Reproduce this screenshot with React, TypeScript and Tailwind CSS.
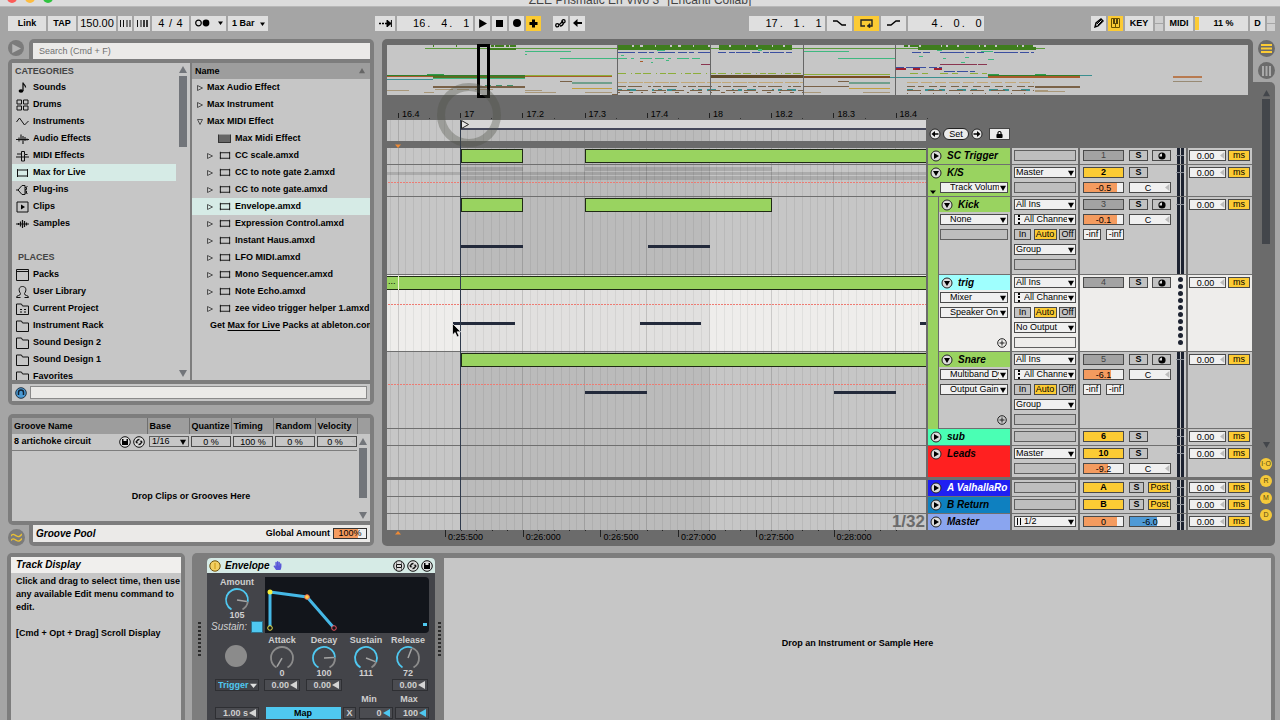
import React from 'react';
import clsx from 'clsx';
import { FaHandPaper, FaLock } from 'react-icons/fa';

// ---------- timeline scale ----------
const BEAT = 62.2;
const ORIGIN = 11; // x of 16.4 inside the lane
const beatX = (n: number) => ORIGIN + n * BEAT;

interface Clip {
  x: number;
  w: number;
}

interface Track {
  name: string;
  height: string;
  color: string;
  child?: boolean;
  group?: boolean;
  fullColor?: boolean;
  open?: boolean;
  whiteName?: boolean;
  selected?: boolean;
  thick?: boolean;
  nameSlots?: string[];
  io: string[];
  num?: string;
  numOn?: boolean;
  solo?: boolean;
  rec?: boolean;
  post?: boolean;
  vol?: string;
  volFill?: string;
  pan?: string;
  inf?: boolean;
  dots?: boolean;
  plus?: boolean;
  clips?: Clip[];
  notes?: Clip[];
  noteY?: number;
  dashY?: number;
  summary?: boolean;
}

const TRACKS: Track[] = [
  { name: 'SC Trigger', height: 'h-[17px]', color: 'bg-[#99d360]', fullColor: true, io: [''], num: '1', solo: true, rec: true, clips: [{ x: 74, w: 62 }, { x: 198, w: 2000 }] },
  { name: 'K/S', height: 'h-8', color: 'bg-[#99d360]', fullColor: true, group: true, open: true, nameSlots: ['Track Volume'], io: ['Master', ''], num: '2', numOn: true, solo: true, vol: '-0.5', volFill: 'bg-[linear-gradient(90deg,#f49b5f_84%,#f0f0f0_84%)]', pan: 'C', dashY: 17, summary: true },
  { name: 'Kick', height: 'h-[78px]', color: 'bg-[#99d360]', child: true, open: true, nameSlots: ['None', ''], io: ['All Ins', '⋮All Channels', 'monitor', 'Group', ''], num: '3', solo: true, rec: true, vol: '-0.1', volFill: 'bg-[linear-gradient(90deg,#f49b5f_84%,#f0f0f0_84%)]', pan: 'C', inf: true, clips: [{ x: 74, w: 62 }, { x: 198, w: 187 }], notes: [{ x: 74, w: 62 }, { x: 261, w: 62 }], noteY: 48 },
  { name: 'trig', height: 'h-[77px]', color: 'bg-[#9ffffe]', child: true, open: true, selected: true, nameSlots: ['Mixer', 'Speaker On'], io: ['All Ins', '⋮All Channels', 'monitor', 'No Output', ''], num: '4', solo: true, rec: true, dots: true, plus: true, clips: [{ x: -10, w: 2000 }], notes: [{ x: 66, w: 62 }, { x: 253, w: 61 }, { x: 533, w: 62 }], noteY: 47, dashY: 29 },
  { name: 'Snare', height: 'h-[77px]', color: 'bg-[#99d360]', child: true, open: true, nameSlots: ['Multiband Dynamics', 'Output Gain'], io: ['All Ins', '⋮All Channels', 'monitor', 'Group', ''], num: '5', solo: true, rec: true, vol: '-6.1', volFill: 'bg-[linear-gradient(90deg,#f49b5f_70%,#f0f0f0_70%)]', pan: 'C', inf: true, plus: true, clips: [{ x: 74, w: 2000 }], notes: [{ x: 198, w: 62 }, { x: 447, w: 62 }], noteY: 39, dashY: 32 },
  { name: 'sub', height: 'h-[17px]', color: 'bg-[#4affb4]', fullColor: true, io: [''], num: '6', numOn: true, solo: true },
  { name: 'Leads', height: 'h-[34px]', color: 'bg-[#ff2020]', fullColor: true, thick: true, io: ['Master', ''], num: '10', numOn: true, solo: true, vol: '-9.2', volFill: 'bg-[linear-gradient(90deg,#f49b5f_62%,#f0f0f0_62%)]', pan: 'C' },
  { name: 'A ValhallaRo', height: 'h-[17px]', color: 'bg-[#1f1ff2]', fullColor: true, whiteName: true, io: [''], num: 'A', numOn: true, solo: true, post: true },
  { name: 'B Return', height: 'h-[17px]', color: 'bg-[#0e80c0]', fullColor: true, io: [''], num: 'B', numOn: true, solo: true, post: true },
  { name: 'Master', height: 'h-4', color: 'bg-[#8aa5ef]', fullColor: true, io: ['ǁ1/2'] },
];

// ---------- small pieces ----------
const Tri = ({ dir = 'down', className = '' }: { dir?: 'down' | 'up' | 'left' | 'right'; className?: string }) => {
  const d = { down: 'M0 1h8L4 8z', up: 'M0 7h8L4 0z', left: 'M7 0v8L0 4z', right: 'M1 0v8l7-4z' }[dir];
  return (
    <svg viewBox="0 0 8 8" preserveAspectRatio="none" className={clsx('shrink-0', className)} fill="currentColor" aria-hidden>
      <path d={d} />
    </svg>
  );
};

function Drop({ value, icon, label, indent }: { value: string; icon?: 'dots' | 'bars'; label: string; indent?: boolean }) {
  return (
    <div className="relative h-[11px] w-full border border-[#4a4a4a] bg-[#f0f0f0]">
      <select
        aria-label={label}
        className={clsx('block h-[9px] w-full appearance-none overflow-hidden bg-transparent pr-2 text-[9px] leading-[9px] outline-none', icon || indent ? 'pl-[9px]' : 'pl-px')}
      >
        <option>{value}</option>
      </select>
      {icon === 'dots' && <span className="absolute left-[3px] top-0 h-[9px] border-l-2 border-dotted border-black" />}
      {icon === 'bars' && <span className="absolute left-[2px] top-px h-[7px] w-1 border-x border-black" />}
      <Tri className="pointer-events-none absolute right-px top-[2px] h-[6px] w-[6px]" />
    </div>
  );
}

const Blank = ({ white }: { white?: boolean }) => (
  <div className={clsx('h-[11px] w-full border border-[#5f5f5f]', white ? 'bg-[#eeedeb]' : 'bg-[#bebebe]')} />
);

function Num({ value, label, className, slider }: { value: string; label: string; className: string; slider?: boolean }) {
  return (
    <div className={clsx('relative h-[11px] shrink-0 border border-[#4a4a4a]', className)}>
      <input aria-label={label} defaultValue={value} className={clsx('block h-[9px] w-full bg-transparent text-center text-[9px] leading-[9px] outline-none', slider && 'pr-1')} />
      {slider && <Tri dir="left" className="absolute right-0 top-px h-[7px] w-[5px] text-[#bdbdbd]" />}
    </div>
  );
}

const Mini = ({ children, className }: { children: React.ReactNode; className: string }) => (
  <button className={clsx('flex h-[11px] shrink-0 items-center justify-center overflow-hidden border border-[#4a4a4a] text-[9px] leading-[9px]', className)}>
    {children}
  </button>
);

function Fold({ open }: { open?: boolean }) {
  return (
    <button aria-label="Unfold track" className="shrink-0">
      <svg width="12" height="12" viewBox="0 0 12 12">
        <circle cx="6" cy="6" r="5" fill="#dcdcdc" stroke="#222" />
        <path d={open ? 'M3 4h6L6 9z' : 'M4 3v6l5-3z'} fill="#000" />
      </svg>
    </button>
  );
}

// ---------- transport ----------
function TBox({ className, children, on, label }: { className: string; children: React.ReactNode; on?: boolean; label?: string }) {
  return (
    <button aria-label={label} className={clsx('flex h-[15px] shrink-0 items-center justify-center text-[9px] font-bold leading-[15px]', on ? 'bg-[#fccb34]' : 'bg-[#dfdfdf]', className)}>
      {children}
    </button>
  );
}

function Position({ label, parts, className }: { label: string; parts: string[]; className: string }) {
  return (
    <div className={clsx('flex h-[15px] shrink-0 items-center justify-end bg-[#dfdfdf] text-[11px]', className)}>
      {parts.map((p, i) => (
        <React.Fragment key={i}>
          <input aria-label={`${label} ${i + 1}`} defaultValue={p} className="h-[15px] w-[13px] bg-transparent text-right outline-none" />
          {i < 2 && <span className="w-[9px] pl-[2px]">.</span>}
        </React.Fragment>
      ))}
    </div>
  );
}

const Leds = () => (
  <div className="flex w-2 flex-col gap-px">
    <span className="h-[7px] bg-[#cfcfcf]" />
    <span className="h-[7px] bg-[#cfcfcf]" />
  </div>
);

function Transport() {
  return (
    <div className="flex h-4 items-center pl-2 pr-[5px]">
      <div className="flex gap-[2px]">
        <TBox className="w-[38px]">Link</TBox>
        <TBox className="w-7">TAP</TBox>
        <input aria-label="Tempo" defaultValue="150.00" className="h-[15px] w-[38px] bg-[#dfdfdf] text-center text-[11px] outline-none" />
        <TBox className="w-[14px]" label="Nudge down">
          <svg width="11" height="7" viewBox="0 0 11 7" stroke="#111"><path d="M.5 0v7M3.5 0v7M7 0v7M10 0v7" strokeWidth="1" /></svg>
        </TBox>
        <TBox className="w-4" label="Nudge up">
          <svg width="11" height="7" viewBox="0 0 11 7" stroke="#111"><path d="M.5 0v7M4 0v7" /><path d="M7 0v7M10 0v7" strokeWidth="1.6" /></svg>
        </TBox>
        <div className="flex h-[15px] w-[37px] items-center justify-around bg-[#dfdfdf] px-1 text-[11px]">
          <span>4</span><span>/</span><span>4</span>
        </div>
        <TBox className="w-[35px] gap-2" label="Metronome">
          <svg width="15" height="8" viewBox="0 0 15 8"><circle cx="3.5" cy="4" r="2.8" fill="none" stroke="#000" strokeWidth="1.2" /><circle cx="11" cy="4" r="3.4" /></svg>
          <Tri className="h-1 w-[5px]" />
        </TBox>
        <div className="relative h-[15px] w-10 bg-[#dfdfdf]">
          <select aria-label="Quantization" className="h-[15px] w-full appearance-none pl-1 text-[9px] font-bold outline-none">
            <option>1 Bar</option>
          </select>
          <Tri className="pointer-events-none absolute right-[3px] top-[6px] h-1 w-[5px]" />
        </div>
      </div>
      <div className="grow-[109]" />
      <div className="flex gap-[2px]">
        <TBox className="w-5" label="Follow">
          <svg width="13" height="7" viewBox="0 0 13 7"><path d="M0 3.5h2M3 3.5h2M6 3.5h6" stroke="#000" strokeWidth="1.6" /><path d="M8 0l4 3.5L8 7zM12.4 0v7" stroke="#000" /></svg>
        </TBox>
        <Position label="Position" parts={['16', '4', '1']} className="w-[76px] pr-1" />
        <TBox className="w-[15px]" label="Play"><Tri dir="right" className="h-[9px] w-[9px]" /></TBox>
        <TBox className="w-[15px]" label="Stop"><span className="size-[7px] bg-black" /></TBox>
        <TBox className="w-[15px]" label="Record"><span className="size-[8px] rounded-full bg-black" /></TBox>
        <TBox className="w-[15px]" on label="Overdub">
          <svg width="9" height="9" viewBox="0 0 9 9" stroke="#000" strokeWidth="3"><path d="M4.500 .5v8M.5 4.500h8" /></svg>
        </TBox>
        <div className="w-[8px]" />
        <TBox className="w-[15px]" label="Automation arm">
          <svg width="11" height="9" viewBox="0 0 11 9" fill="none" stroke="#000" strokeWidth="1.3"><circle cx="2.300" cy="6.300" r="1.600" /><path d="M4 6l4-4" /><circle cx="8.500" cy="2.300" r="1.600" /><path d="M5 7c2 0 3-1 3.500-3" /></svg>
        </TBox>
        <TBox className="w-[15px]" label="Back to arrangement">
          <svg width="9" height="8" viewBox="0 0 9 8"><path d="M0 4l4.500-4v8z" /><path d="M3 4h6" stroke="#000" strokeWidth="2" /></svg>
        </TBox>
      </div>
      <div className="grow-[166]" />
      <div className="flex gap-[2px]">
        <Position label="Loop start" parts={['17', '1', '1']} className="w-[76px] pr-[3px]" />
        <TBox className="w-[25px]" label="Punch in"><svg width="13" height="6" viewBox="0 0 13 6" fill="none" stroke="#000" strokeWidth="1.4"><path d="M0 1h4l5 4h4" /></svg></TBox>
        <TBox className="w-[25px]" on label="Loop">
          <svg width="13" height="9" viewBox="0 0 13 9" fill="none" stroke="#222" strokeWidth="1.4"><path d="M5 7H1V1h11v6H9" /><path d="M10 4.500L7 7l3 2z" fill="#222" strokeWidth=".5" /></svg>
        </TBox>
        <TBox className="w-[25px]" label="Punch out"><svg width="13" height="6" viewBox="0 0 13 6" fill="none" stroke="#000" strokeWidth="1.4"><path d="M0 5h4l5-4h4" /></svg></TBox>
        <Position label="Loop length" parts={['4', '0', '0']} className="w-[76px] pr-[2px]" />
      </div>
      <div className="grow-[109]" />
      <div className="flex gap-[2px]">
        <TBox className="w-[15px]" label="Draw mode">
          <svg width="10" height="10" viewBox="0 0 10 10"><path d="M1 9l1-4 5-4 2 2-5 5z" fill="none" stroke="#000" strokeWidth="1.4" /><path d="M3 6l4-4M4 7l4-4" stroke="#000" /></svg>
        </TBox>
        <TBox className="w-[15px]" on label="Computer MIDI keyboard">
          <svg width="9" height="10" viewBox="0 0 9 10" fill="none" stroke="#6b5200"><path d="M.5.5h8v9h-8zM4.500 5v4" /><path d="M3 1v5M6 1v5" stroke="#2b2100" strokeWidth="1.6" /></svg>
        </TBox>
        <TBox className="w-7">KEY</TBox>
        <Leds />
        <TBox className="w-7">MIDI</TBox>
        <div className="flex h-[15px] w-[53px] items-center bg-[#dfdfdf] text-[9px] font-bold">
          <span className="h-[13px] w-1 bg-[#fccb34]" />
          <span className="flex-1 text-center">11 %</span>
        </div>
        <TBox className="w-[15px]">D</TBox>
        <Leds />
      </div>
    </div>
  );
}

// ---------- browser ----------
const ICONS: Record<string, React.ReactNode> = {
  sounds: <g><ellipse cx="5" cy="10" rx="2.400" ry="1.800" fill="#000" stroke="none" /><path d="M7 10V1.500c0 2 3 2.500 2.500 5" strokeWidth="1.300" /></g>,
  drums: <path d="M1 2h4.500v4H1zM7.500 2H12v4H7.500zM1 8h4.500v4H1zM7.500 8H12v4H7.500z" />,
  instruments: <path d="M.5 7l3-4 5 7 4-4" />,
  audio: <path d="M0 7.500h13M3 5.500v4M5 2.500v6M7 4v8M9 5v4M11 6.500v2" strokeWidth="1.100" />,
  midi: <path d="M1 5h4.500V2.500h3V5M0 8h13M5.500 5v7h3V5.500h3" />,
  max: <path d="M1.500 4h10v6h-10zM1.500 3v2M11.500 3v2M1.500 9v2M11.500 9v2" />,
  plug: <path d="M6 2.500H9v9H6M6 2.500L2 7l4 4.500M0 7h3M9 4.500h1.500v2H9M9 8h1.500v2H9M11 3v1M11 10v1" />,
  clips: <g><path d="M1 2h11v10H1z" /><path d="M5 4.500v5L9 7z" fill="#000" stroke="none" /></g>,
  samples: <path d="M0 7h13M2.500 6v2M4.500 4.500v5M6.500 3v8M8.500 4v6M10.500 5.500v3" strokeWidth="1.200" />,
  packs: <path d="M.5 1.500h12v11H.5zM.5 3.500h12" />,
  user: <path d="M.5 12.500h4M8.500 12.500h4M.5 12.500c0-3 4-1 4-4C2 5 3 1.500 6.500 1.500S11 5 8.500 8.500c0 3 4 1 4 4" />,
  project: <path d="M.5 12.500V2h5l1 2h6v8.500zM4 7.500h2M8 7.500h2M4 10h2M8 10h2" />,
  folder: <path d="M.5 12.500V2h5l1 2h6v8.500z" />,
};

const BIcon = ({ name, className = 'h-[14px] w-[13px]' }: { name: string; className?: string }) => (
  <svg viewBox="0 0 13 14" className={clsx('shrink-0', className)} fill="none" stroke="#111" aria-hidden>{ICONS[name]}</svg>
);

const CATEGORIES = [
  ['sounds', 'Sounds'], ['drums', 'Drums'], ['instruments', 'Instruments'], ['audio', 'Audio Effects'], ['midi', 'MIDI Effects'],
  ['max', 'Max for Live'], ['plug', 'Plug-ins'], ['clips', 'Clips'], ['samples', 'Samples'],
];
const PLACES = [
  ['packs', 'Packs'], ['user', 'User Library'], ['project', 'Current Project'], ['folder', 'Instrument Rack'],
  ['folder', 'Sound Design 2'], ['folder', 'Sound Design 1'], ['folder', 'Favorites'],
];
const DEVICES = [
  'CC scale.amxd', 'CC to note gate 2.amxd', 'CC to note gate.amxd', 'Envelope.amxd', 'Expression Control.amxd', 'Instant Haus.amxd',
  'LFO MIDI.amxd', 'Mono Sequencer.amxd', 'Note Echo.amxd', 'zee video trigger helper 1.amxd',
];

const SideItem = ({ icon, text }: { icon: string; text: string }) => (
  <li className={clsx('flex h-[17px] w-[164px] items-center gap-1 pl-1', text === 'Max for Live' && 'bg-[#d6ebe6]')}>
    <BIcon name={icon} />
    {text}
  </li>
);

const Outline = ({ open }: { open?: boolean }) => (
  <svg width="6" height="6" viewBox="0 0 6 6" fill="none" stroke="#333" strokeWidth=".8" aria-hidden>
    <path d={open ? 'M.5.5h5L3 5.500z' : 'M.5.500v5L5.500 3z'} />
  </svg>
);

function Browser() {
  return (
    <section>
      <div className="flex items-start justify-between">
        <button aria-label="Show browser" className="mt-px flex size-4 items-center justify-center rounded-full bg-[#7b7b7b] text-[#b5b5b5]">
          <Tri dir="right" className="h-[9px] w-[10px]" />
        </button>
        <div className="w-[345px] rounded-t-[5px] bg-[#7d7d7d] px-1 pt-1">
          <input aria-label="Search" placeholder="Search (Cmd + F)" className="block h-4 w-full bg-[#ebeae8] px-[6px] text-[9px] outline-none placeholder:text-[#707070]" />
        </div>
      </div>
      <div className="rounded-b-[5px] rounded-tl-[5px] bg-[#7d7d7d] p-1 text-[9px] font-bold">
        <div className="flex h-[317px] gap-[2px]">
          <div className="flex w-[178px] justify-between overflow-hidden bg-[#c6c6c6] pr-[3px]">
            <div>
              <h2 className="h-4 pl-[3px] text-[9px] leading-4 text-[#444]">CATEGORIES</h2>
              <ul>{CATEGORIES.map(([i, t]) => <SideItem key={t} icon={i} text={t} />)}</ul>
              <h2 className="mt-[17px] h-[17px] pl-[6px] text-[9px] leading-[17px] text-[#444]">PLACES</h2>
              <ul>{PLACES.map(([i, t]) => <SideItem key={t} icon={i} text={t} />)}</ul>
            </div>
            <div className="flex flex-col items-center py-[3px] text-[#72757a]">
              <Tri dir="up" className="size-2" />
              <div className="mt-[2px] h-[71px] w-2 bg-[#72757a]" />
              <Tri className="mt-auto size-2" />
            </div>
          </div>
          <div className="min-w-0 flex-1 overflow-hidden bg-[#c6c6c6]">
            <div className="flex h-4 items-center justify-between bg-[#9d9d9d] pl-[3px] pr-[5px]">
              Name <Tri dir="up" className="size-[6px] text-[#666]" />
            </div>
            <ul>
              {['Max Audio Effect', 'Max Instrument', 'Max MIDI Effect'].map((t, i) => (
                <li key={t} className="flex h-[17px] items-center gap-1 pl-[5px]"><Outline open={i === 2} />{t}</li>
              ))}
              <li className="flex h-[17px] items-center gap-1 pl-[26px]">
                <span className="h-[9px] w-[13px] rounded-[1px] border border-[#333] border-t-[#999] bg-[#666]" />Max Midi Effect
              </li>
              {DEVICES.map((t) => (
                <li key={t} className={clsx('flex h-[17px] items-center whitespace-nowrap pl-[15px]', t === 'Envelope.amxd' && 'bg-[#d6ebe6]')}>
                  <Outline /><BIcon name="max" className="ml-[6px] mr-1 h-[13px] w-3" />{t}
                </li>
              ))}
              <li className="h-[17px] whitespace-nowrap pl-[18px] leading-[17px]">
                Get <a href="#max" className="underline underline-offset-2">Max for Live</a> Packs at ableton.com
              </li>
            </ul>
          </div>
        </div>
        <div className="mt-1 flex h-[17px] items-center gap-[3px] bg-[#c6c6c6] pl-[3px] pr-[3px]">
          <button aria-label="Preview">
            <svg width="12" height="12" viewBox="0 0 12 12"><circle cx="6" cy="6" r="5.300" fill="#4a9ad4" stroke="#234" /><path d="M3.500 8V5.500a2.500 2.500 0 015 0V8" fill="none" stroke="#123" strokeWidth="1.500" /></svg>
          </button>
          <input aria-label="Preview clip" readOnly className="h-[13px] min-w-0 flex-1 border border-[#8a8a8a] bg-[#ebeae8] outline-none" />
        </div>
      </div>
    </section>
  );
}

const RoundSave = () => (
  <svg width="12" height="12" viewBox="0 0 12 12"><circle cx="6" cy="6" r="5.300" fill="#ddd" stroke="#111" /><path d="M3 3h6v6H3z" /><path d="M4.500 3h3v2h-3z" fill="#ddd" /></svg>
);
const RoundSwap = () => (
  <svg width="12" height="12" viewBox="0 0 12 12" fill="none" stroke="#111"><circle cx="6" cy="6" r="5.300" fill="#ddd" /><path d="M3.500 7a3 3 0 013-3.500M8.500 5a3 3 0 01-3 3.500" strokeWidth="1.300" /><path d="M2.500 5.500L4 7.500 5 6M9.500 6.500L8 4.500 7 6" strokeWidth=".7" /></svg>
);

function GroovePool() {
  const th = 'border-l border-[#6f6f6f] px-[2px] text-left font-bold';
  return (
    <section className="text-[9px]">
      <div className="rounded-t-[5px] rounded-bl-[5px] bg-[#7d7d7d] p-1">
        <div className="h-[103px] bg-[#c6c6c6]">
          <div className="flex">
            <table className="w-[345px] table-fixed border-collapse">
              <thead>
                <tr className="h-4 bg-[#9d9d9d]">
                  <th className="w-[135px] pl-[2px] text-left">Groove Name</th>
                  <th className={th}>Base</th><th className={th}>Quantize</th><th className={th}>Timing</th><th className={th}>Random</th><th className={th}>Velocity</th>
                </tr>
              </thead>
              <tbody>
                <tr className="h-4 border-b border-[#7d7d7d]">
                  <td className="pl-[2px]">
                    <div className="flex items-center gap-[2px] font-bold">
                      <span className="flex-1">8 artichoke circuit</span>
                      <button aria-label="Save groove"><RoundSave /></button><button aria-label="Hot-swap groove" className="mr-[2px]"><RoundSwap /></button>
                    </div>
                  </td>
                  <td className="pl-[2px]">
                    <div className="relative border border-[#5f5f5f]">
                      <select aria-label="Base" className="block h-[9px] w-full appearance-none pl-[2px] leading-[9px] outline-none"><option>1/16</option></select>
                      <Tri className="pointer-events-none absolute right-[2px] top-[2px] h-[6px] w-[6px]" />
                    </div>
                  </td>
                  <td className="pl-[2px]"><Num label="Quantize" value="0 %" className="w-full" /></td>
                  <td className="pl-[2px]"><Num label="Timing" value="100 %" className="w-full" /></td>
                  <td className="pl-[2px]"><Num label="Random" value="0 %" className="w-full" /></td>
                  <td className="pl-[2px]"><Num label="Velocity" value="0 %" className="w-full" slider /></td>
                </tr>
              </tbody>
            </table>
            <div className="relative h-4 flex-1 border-l border-[#6f6f6f] bg-[#9d9d9d]">
              <div className="absolute left-px top-5 flex h-[81px] flex-col text-[#72757a]">
                <Tri dir="up" className="size-2" />
                <div className="mt-[2px] h-[50px] w-2 bg-[#72757a]" />
                <Tri className="mt-auto size-2" />
              </div>
            </div>
          </div>
          <p className="pt-[38px] text-center font-bold leading-[14px]">Drop Clips or Grooves Here</p>
        </div>
      </div>
      <div className="flex items-end justify-between">
        <button aria-label="Groove pool" className="flex size-[17px] items-center justify-center rounded-full bg-[#7b7b7b]">
          <svg width="11" height="9" viewBox="0 0 11 9" fill="none" stroke="#e9bf35" strokeWidth="1.400"><path d="M0 3c2-3 4-1 5.500 0S9 4 11 1M0 7.500c2-3 4-1 5.500 0s3.500 1 5.500-2" /></svg>
        </button>
        <div className="w-[345px] rounded-b-[5px] bg-[#7d7d7d] px-1 pb-1">
          <div className="flex h-[17px] items-center bg-[#ebeae8] pl-[3px] pr-[3px] font-bold">
            <h2 className="flex-1 text-[10px] italic">Groove Pool</h2>
            <label htmlFor="amount" className="pr-[3px]">Global Amount</label>
            <input id="amount" defaultValue="100%" className="h-[11px] w-[34px] border border-[#333] bg-[linear-gradient(90deg,#f49b5f_75%,#f0f0f0_75%)] text-center font-normal outline-none" />
          </div>
        </div>
      </div>
    </section>
  );
}

// ---------- arrangement ----------
// [x, y, w, h, color, dash]
type Seg = [number, number, number, number, string, string?];
const G = '#3f7d1e', M = '#3fb880', B = '#3b4fa0', N = '#7a6248', T = '#a8977a', L = '#8cad3a', C = '#3a8f90', O = '#a85b2a';
const OVERVIEW: Seg[] = [
  [38, 3, 620, 1, '#5b9a3a'], [46, 0, 1, 2, G], [69, 0, 1, 2, G], [93, 0, 36, 2, G, '9 2 3 1'], [103, 3, 26, 2, G],
  [231, 0, 92, 2, G, '14 2 6 3 12 1'], [231, 2, 92, 3, G], [332, 0, 73, 2, G, '10 2 14 1'], [332, 2, 73, 3, G],
  [517, 0, 130, 2, G, '4 2 9 2 20 1'], [531, 2, 118, 3, G],
  [138, 6, 46, 1, M], [173, 13, 58, 1, M], [416, 6, 46, 1, M], [451, 13, 57, 1, M], [138, 9, 2, 1, M],
  [231, 7, 92, 1, B, '17 3 9 2 5 4'], [331, 7, 74, 1, B, '8 3 6 1 14 2'], [525, 7, 122, 1, B, '9 2 7 10 24 2'],
  [270, 5, 8, 1, M], [550, 5, 5, 1, M], [594, 6, 12, 1, M], [371, 4, 4, 2, M],
  [231, 13, 82, 1, M, '9 4 3 6 12 3'], [234, 10, 3, 1, M], [264, 17, 2, 1, M], [279, 15, 3, 1, M], [253, 16, 3, 1, O], [532, 11, 4, 1, M], [556, 13, 3, 1, M], [578, 12, 4, 1, M], [574, 17, 4, 1, M], [601, 14, 6, 1, M],
  [314, 19, 9, 1, '#8a3550'], [553, 19, 47, 1, '#8a3550', '37 1 9 0'], [509, 22, 46, 1, B, '8 2 20 3'], [509, 23, 46, 2, '#a02030', '10 7 7 14'], [557, 26, 31, 1, B, '11 2'],
  [231, 28, 185, 1, L, '8 5 1 3 6 2'], [523, 28, 77, 1, L, '8 4 6 12'], [40, 29, 17, 1, '#2f9a4a'],
  [0, 30, 138, 1, '#2f7f2c'], [0, 31, 132, 1, O], [46, 31, 92, 2, '#5c6a22'], [0, 34, 46, 1, C], [46, 33, 92, 1, M],
  [138, 30, 87, 1, L], [138, 31, 87, 1, O], [323, 30, 93, 3, '#5f4a2c'], [416, 29, 87, 1, L], [416, 31, 87, 2, '#7a4a20'],
  [503, 32, 98, 1, C], [601, 29, 11, 1, '#2f9a4a'], [648, 29, 11, 1, '#2f9a4a'], [601, 30, 92, 1, '#2f7f2c'], [601, 31, 92, 2, O], [693, 30, 12, 1, C],
  [786, 31, 29, 2, '#b87a50'], [786, 36, 29, 1, '#988a74'],
  [173, 36, 12, 1, N], [185, 37, 40, 2, '#6f9f8c'], [185, 43, 40, 1, '#c0a040'], [451, 36, 11, 1, N], [462, 37, 41, 2, '#6f9f8c'], [462, 43, 41, 1, '#c0a040'],
  [231, 37, 185, 1, '#c2a878', '9 2 14 1'], [520, 37, 127, 1, '#c2a878', '11 3'],
  [46, 41, 92, 2, N], [98, 40, 29, 1, '#3f8f6a', '6 5'], [231, 41, 185, 1, N, '8 2 14 6 3 2'], [520, 41, 127, 1, N, '8 3 6 5'], [416, 41, 46, 1, N], [648, 41, 45, 2, N],
  [231, 44, 185, 2, C, '4 5 9 16 2 4'], [231, 45, 185, 1, N, '12 6'], [520, 44, 127, 2, C, '6 12 9 5'], [520, 45, 127, 1, N, '14 7'],
  [0, 45, 22, 1, T], [37, 47, 10, 1, T], [48, 44, 60, 1, T, '18 4 12 6'], [138, 45, 17, 1, T], [138, 47, 31, 1, T], [198, 47, 27, 1, T], [225, 49, 6, 1, N], [476, 47, 27, 1, T], [416, 47, 18, 1, T], [648, 45, 13, 1, T], [648, 46, 30, 1, T],
  [231, 47, 185, 1, N, '2 9 4 8'], [520, 48, 127, 1, N, '1 12'],
];

function Overview() {
  return (
    <svg className="mr-1 h-[50px] w-auto self-stretch overflow-visible bg-[#c6c6c6]" viewBox="0 0 861 50" preserveAspectRatio="none" shapeRendering="crispEdges">
      {OVERVIEW.map(([x, y, w, h, c, d], i) => (
        <line key={i} x1={x} x2={x + w} y1={y + h / 2} y2={y + h / 2} stroke={c} strokeWidth={h} strokeDasharray={d} />
      ))}
      {[230, 323, 416, 508].map((x) => <path key={x} d={`M${x + 0.5} 0V50`} stroke="#666" />)}
      <rect x="91.500" y="0" width="10" height="51" fill="none" stroke="#000" strokeWidth="3" />
    </svg>
  );
}

function Grid({ light }: { light?: boolean }) {
  return (
    <svg className="absolute inset-0 size-full" shapeRendering="crispEdges" aria-hidden>
      <rect x={beatX(1)} y="0" width={BEAT * 4} height="100%" fill="#000" opacity=".05" />
      {Array.from({ length: 160 }, (_, i) => i - 1).map((i) => (
        <line key={i} x1={ORIGIN + (i * BEAT) / 8} x2={ORIGIN + (i * BEAT) / 8} y1="0" y2="100%" stroke="#000" opacity={i % 8 === 0 ? 0.14 : light ? 0.05 : 0.06} />
      ))}
    </svg>
  );
}

function Lane({ t }: { t: Track }) {
  return (
    <div className={clsx('relative min-w-0 flex-1 overflow-hidden border-[#6f6f6f]', t.selected ? 'bg-[#eeedeb]' : 'bg-[#c6c6c6]', t.thick ? 'border-b-[3px]' : t.name === 'Master' ? '' : 'border-b')}>
      <Grid light={t.selected} />
      {t.summary && (
        <svg className="absolute inset-0 size-full" fill="#000" opacity=".13" aria-hidden>
          <rect x="74" y="2" width="62" height="4" /><rect x="198" y="2" width="187" height="4" />
          <rect y="7" width="100%" height="3" /><rect x="74" y="11" width="100%" height="4" />
        </svg>
      )}
      {t.clips?.map((c) => (
        <div key={c.x} className="absolute top-px h-[14px] border border-[#1f2a14] bg-[#99d360]" style={{ left: c.x, width: c.w }} />
      ))}
      {t.selected && (
        <>
          <span className="absolute left-px top-[2px] text-[9px] leading-[9px]">...</span>
          <span className="absolute left-[11px] top-px h-[14px] w-px bg-[#f4f4d8]" />
        </>
      )}
      {t.dashY && (
        <svg className="absolute inset-0 size-full" shapeRendering="crispEdges" aria-hidden>
          <line x1="1" x2="100%" y1={t.dashY + 0.5} y2={t.dashY + 0.5} stroke="#ee7b72" strokeDasharray="2 1" />
        </svg>
      )}
      {t.notes?.map((n) => (
        <div key={n.x} className="absolute h-[3px] bg-[#232a3b]" style={{ left: n.x, width: n.w, top: t.noteY }} />
      ))}
      {t.name === 'Master' && <span className="absolute right-px top-0 text-[17px] font-bold leading-4 text-[#6b6b6b]">1/32</span>}
    </div>
  );
}

function IoSlot({ v, t }: { v: string; t: Track }) {
  if (v === '') return <Blank white={t.selected} />;
  if (v === 'monitor') {
    return (
      <div className="flex justify-between">
        <Mini className="w-[17px] bg-[#c2c2c2]">In</Mini>
        <Mini className="w-[23px] bg-[#fccb34]">Auto</Mini>
        <Mini className="w-[17px] bg-[#c2c2c2]">Off</Mini>
      </div>
    );
  }
  const icon = v[0] === '⋮' ? 'dots' : v[0] === 'ǁ' ? 'bars' : undefined;
  return <Drop label={`${t.name} routing`} value={icon ? v.slice(1) : v} icon={icon} />;
}

function TrackRow({ t }: { t: Track }) {
  const edge = clsx('border-[#6f6f6f]', t.thick ? 'border-b-[3px]' : t.name === 'Master' ? '' : 'border-b');
  const bg = t.selected ? 'bg-[#eeedeb]' : 'bg-[#c6c6c6]';
  return (
    <div className={clsx('flex gap-[2px]', t.height)}>
      <Lane t={t} />
      <div className="flex w-[82px] shrink-0">
        {t.child && <div className="mr-px w-[10px] shrink-0 bg-[#99d360]" />}
        <div className={clsx('relative min-w-0 flex-1', edge, t.fullColor ? t.color : bg)}>
          <div className={clsx('flex h-[15px] items-center gap-[5px] pl-[2px]', t.color)}>
            <Fold open={t.open} />
            <span className={clsx('whitespace-nowrap text-[10px] font-bold italic leading-[14px]', t.whiteName && 'text-white')}>{t.name}</span>
          </div>
          <div className="ml-auto flex w-[70px] flex-col gap-1 pr-[2px] pt-[2px]">
            {t.nameSlots?.map((s, i) => (s ? <Drop key={i} label={`${t.name} automation ${i + 1}`} value={s} indent /> : <Blank key={i} />))}
          </div>
          {t.group && <Tri className="absolute bottom-[2px] left-[2px] h-1 w-[6px]" />}
          {t.plus && (
            <button aria-label="Add automation lane" className="absolute bottom-[3px] right-[3px]">
              <svg width="10" height="10" viewBox="0 0 10 10" fill="none" stroke="#222"><circle cx="5" cy="5" r="4.300" /><path d="M5 2.500v5M2.500 5h5" /></svg>
            </button>
          )}
        </div>
      </div>
      <div className={clsx('flex w-[66px] shrink-0 flex-col gap-1 px-[2px] pt-[2px]', edge, bg)}>
        {t.io.map((v, i) => <IoSlot key={i} v={v} t={t} />)}
      </div>
      <div className={clsx('flex w-[106px] shrink-0 justify-between pl-[3px] pr-[2px]', edge, bg)}>
        <div className="flex flex-col gap-1 pt-[2px]">
          {t.num ? (
            <div className="flex gap-[5px]">
              <Mini className={clsx('w-[41px]', t.numOn ? 'bg-[#fccb34] font-bold' : 'bg-[#a3a3a3] text-[#444]')}>{t.num}</Mini>
              <div className="flex w-[42px] justify-between">
                <Mini className={clsx('bg-[#c2c2c2] font-bold', t.post ? 'w-[15px]' : 'w-[19px]')}>S</Mini>
                {t.rec && (
                  <Mini className="w-[19px] bg-[#c2c2c2]">
                    <svg width="8" height="8" viewBox="0 0 8 8"><circle cx="4" cy="4" r="3.600" /><path d="M4 1.500v3H1.500A2.500 2.500 0 014 1.500" fill="#ddd" /></svg>
                  </Mini>
                )}
                {t.post && <Mini className="w-[23px] bg-[#fccb34]">Post</Mini>}
              </div>
            </div>
          ) : (
            <div className="flex gap-[5px]">
              <Num label="Master volume" value="0" className="w-[41px] bg-[linear-gradient(90deg,#f49b5f_84%,#f0f0f0_84%)]" />
              <Num label="Cue volume" value="-6.0" className="w-[42px] bg-[linear-gradient(90deg,#4f9ad6_68%,#f0f0f0_68%)]" />
            </div>
          )}
          {t.vol && (
            <div className="flex gap-[5px]">
              <Num label={`${t.name} volume`} value={t.vol} className={clsx('w-[41px]', t.volFill)} />
              <Num label={`${t.name} pan`} value="C" className="w-[42px] bg-[#f0f0f0]" slider />
            </div>
          )}
          {t.inf && (
            <div className="flex gap-[5px]">
              <Mini className="w-[18px] bg-[#f0f0f0]">-inf</Mini>
              <Mini className="w-[18px] bg-[#f0f0f0]">-inf</Mini>
            </div>
          )}
        </div>
        {t.dots ? (
          <div className="flex w-2 flex-col items-center gap-[2px] pt-[2px]">
            {Array.from({ length: 10 }, (_, i) => <span key={i} className="size-[5px] shrink-0 rounded-full bg-[#1c2230]" />)}
          </div>
        ) : (
          <div className="relative flex w-2 justify-center gap-px">
            <span className="w-[3px] bg-[#1c2230]" /><span className="w-[3px] bg-[#1c2230]" />
            <span className="absolute inset-x-0 top-[7px] h-px bg-[#8a8f98]" />
          </div>
        )}
      </div>
      <div className={clsx('flex w-16 shrink-0 justify-between pl-px pr-[2px] pt-[2px]', edge, bg)}>
        <Num label={`${t.name} delay`} value="0.00" className="w-[37px] bg-[#f0f0f0]" slider />
        <Mini className="w-[22px] bg-[#fccb34]">ms</Mini>
      </div>
    </div>
  );
}

const BEATS = ['16.4', '17', '17.2', '17.3', '17.4', '18', '18.2', '18.3', '18.4'];
const TIMES = ['0:25:500', '0:26:000', '0:26:500', '0:27:000', '0:27:500', '0:28:000'];

const RoundArrow = ({ flip }: { flip?: boolean }) => (
  <button aria-label={flip ? 'Next locator' : 'Previous locator'} className={clsx(flip && 'rotate-180')}>
    <svg width="12" height="12" viewBox="0 0 12 12"><circle cx="6" cy="6" r="5" fill="#ebebeb" stroke="#222" /><path d="M2.500 6L6 3v6z" /><path d="M5 6h4.500" stroke="#000" strokeWidth="1.500" /></svg>
  </button>
);

function Arrangement() {
  return (
    <section className="flex min-w-0 flex-1 text-[9px]">
      <div className="flex min-w-0 flex-1 flex-col rounded-l-[5px] rounded-tr-[5px] bg-[#6b6b6b] pl-[5px] pr-px pt-[6px]">
        <Overview />
        <div className="relative flex flex-col">
          {/* beat ruler */}
          <div className="relative mr-[326px] h-[25px]">
            {BEATS.map((b, i) => (
              <React.Fragment key={b}>
                <span className="absolute bottom-[2px] h-[5px] w-px bg-[#222]" style={{ left: beatX(i) }} />
                <span className="absolute top-[14px] text-[9px] leading-[10px]" style={{ left: beatX(i) + 4 }}>{b}</span>
                <span className="absolute bottom-px size-px bg-[#333]" style={{ left: beatX(i + 0.5) }} />
              </React.Fragment>
            ))}
          </div>
          <div className="flex h-7">
            <div className="flex-1 overflow-hidden">
              <div className="relative h-[21px] bg-[#c6c6c6]">
                <Grid />
                <div className="absolute left-[73px] right-0 top-0 h-[10px] border-b-2 border-[#44475a] bg-[#d6d6d6]" />
                <svg className="absolute left-[74px] top-0" width="9" height="9" viewBox="0 0 9 9" fill="#e6e6e6" stroke="#222"><path d="M.5.5v8l7-4z" /></svg>
              </div>
              <Tri className="ml-2 mt-[3px] h-1 w-[6px] text-[#ee8a35]" />
            </div>
            <div className="flex w-[326px] items-start gap-[2px] pl-[3px] pt-2">
              <RoundArrow />
              <button className="h-3 w-[26px] rounded-full border border-[#222] bg-[#ebebeb] leading-[10px]">Set</button>
              <RoundArrow flip />
              <button aria-label="Lock envelopes" className="ml-1 flex h-3 w-[21px] items-center justify-center border border-[#444] bg-[#ebebeb]"><FaLock size={7} /></button>
            </div>
          </div>
          {TRACKS.map((t) => <TrackRow key={t.name} t={t} />)}
          {/* time ruler */}
          <div className="relative mr-[326px] h-4 overflow-hidden">
            <Tri dir="up" className="ml-2 mt-px h-1 w-[6px] text-[#ee8a35]" />
            {TIMES.map((s, i) => (
              <React.Fragment key={s}>
                <span className="absolute top-0 h-[7px] w-px bg-[#222]" style={{ left: 58 + i * 77.7 }} />
                <span className="absolute top-[2px] leading-[10px]" style={{ left: 61 + i * 77.7 }}>{s}</span>
                {[1, 2, 3, 4].map((k) => (
                  <span key={k} className="absolute top-0 size-px bg-[#222]" style={{ left: 58 + i * 77.7 + k * 15.5 }} />
                ))}
              </React.Fragment>
            ))}
          </div>
          {/* insert marker, click ring and pointer */}
          <span className="pointer-events-none absolute bottom-4 left-[73px] top-[25px] w-px bg-[#2f3a4c]" />
          <svg className="pointer-events-none absolute left-[49px] top-[-13px]" width="66" height="66" viewBox="0 0 66 66" fill="none">
            <circle cx="33" cy="33" r="28" stroke="#4c5046" strokeOpacity=".35" strokeWidth="8" />
          </svg>
          <svg className="pointer-events-none absolute left-[65px] top-[228px]" width="10" height="15" viewBox="0 0 10 15">
            <path d="M.5.5v11.500l2.600-2.500 2 4.500 2-1-2-4.200h3.600z" fill="#000" stroke="#fff" strokeWidth=".7" />
          </svg>
        </div>
      </div>
      <div className="flex w-[22px] shrink-0 flex-col">
        <div className="flex h-[43px] flex-col items-end gap-[5px] pt-px">
          <button aria-label="Arrangement view" className="flex size-[17px] items-center justify-center rounded-full bg-[#6b6b6b]">
            <svg width="11" height="9" viewBox="0 0 11 9" stroke="#fccb34" strokeWidth="2"><path d="M0 1h11M0 4.500h11M0 8h11" /></svg>
          </button>
          <button aria-label="Session view" className="flex size-[17px] items-center justify-center rounded-full bg-[#6b6b6b]">
            <svg width="9" height="10" viewBox="0 0 9 10" stroke="#aaa" strokeWidth="2"><path d="M1 0v10M4.500 0v10M8 0v10" /></svg>
          </button>
        </div>
        <div className="flex flex-1 flex-col items-center rounded-r-[5px] bg-[#6b6b6b] pb-[25px] pl-1 pt-2 text-[#43464b]">
          <Tri dir="up" className="size-[7px]" />
          <div className="mt-[2px] h-[145px] w-2 bg-[#43464b]" />
          <Tri className="mb-[10px] mt-auto size-[7px]" />
          <div className="flex flex-col gap-[5px]">
            {['I·O', 'R', 'M', 'D'].map((l) => (
              <button key={l} className="flex size-3 items-center justify-center rounded-full bg-[#f5c93a] text-[7px] leading-3 text-[#5a4a10]">{l}</button>
            ))}
          </div>
        </div>
      </div>
    </section>
  );
}

// ---------- device view ----------
function Knob({ label, value, amount }: { label: string; value: string; amount: number }) {
  // 0..1 swept over 300 degrees starting bottom left
  const at = (v: number, r: number) => {
    const a = ((120 + v * 300) * Math.PI) / 180;
    return `${13 + r * Math.cos(a)} ${13 + r * Math.sin(a)}`;
  };
  const arc = (a: number, b: number) => `M${at(a, 11)}A11 11 0 ${(b - a) * 300 > 180 ? 1 : 0} 1 ${at(b, 11)}`;
  return (
    <div className="flex flex-col items-center text-[9px] font-bold leading-[10px] text-[#cfcfcf]">
      <span>{label}</span>
      <svg width="26" height="23" viewBox="0 0 26 23" className="overflow-visible" fill="none" strokeWidth="1.800" role="img" aria-label={`${label} ${value}`}>
        <path d={arc(amount, 1)} stroke="#8b8b8b" />
        {amount > 0 && <path d={arc(0, amount)} stroke="#4fc8f0" />}
        <path d={`M13 13L${at(amount, 10)}`} stroke="#a5a5a5" strokeWidth="1.500" />
      </svg>
      <span>{value}</span>
    </div>
  );
}

function DevNum({ label, value, blue, className }: { label: string; value: string; blue?: boolean; className: string }) {
  return (
    <div className={clsx('flex h-3 items-center border border-[#2e2f33] bg-[#4b4c51]', className)}>
      <input aria-label={label} defaultValue={value} className="h-[10px] w-full min-w-0 bg-transparent text-right text-[9px] font-bold leading-[10px] text-[#cfcfcf] outline-none" />
      <Tri dir="left" className={clsx('mx-px size-2', blue ? 'text-[#4fc8f0]' : 'text-[#d5d5d5]')} />
    </div>
  );
}

const Rail = () => <div className="h-[34px] w-[3px] self-center bg-[repeating-linear-gradient(#2c2c2c_0_2px,transparent_2px_4px)]" />;

function Device() {
  return (
    <article className="w-[228px] shrink-0 overflow-hidden rounded-t-[4px] bg-[#434449]">
      <header className="flex h-[15px] items-center gap-1 bg-[#d6ebe6] px-[2px]">
        <button aria-label="Device on"><svg width="12" height="12" viewBox="0 0 12 12"><circle cx="6" cy="6" r="5.200" fill="#f3cf62" stroke="#6e5310" /><path d="M6 3v6" stroke="#d8a928" strokeWidth="1.500" /></svg></button>
        <h3 className="text-[10px] font-bold italic">Envelope</h3>
        <FaHandPaper size={9} className="text-[#5a58d8]" />
        <div className="ml-auto flex gap-[2px]">
          <button aria-label="Edit"><svg width="12" height="12" viewBox="0 0 12 12" fill="none" stroke="#111"><circle cx="6" cy="6" r="5.300" fill="#ddd" /><path d="M3.500 4.500h5v3h-5zM3 3h1M8 3h1M3 9h1M8 9h1" /></svg></button>
          <button aria-label="Hot-swap"><RoundSwap /></button>
          <button aria-label="Save preset"><RoundSave /></button>
        </div>
      </header>
      <div className="pl-1 pr-[6px] pt-1">
        <div className="flex">
          <div className="w-[54px] shrink-0">
            <div className="w-[52px]"><Knob label="Amount" value="105" amount={0.83} /></div>
            <label className="mt-px flex items-center gap-1 text-[10px] italic leading-3 text-[#cfcfcf]">
              Sustain:
              <input type="checkbox" defaultChecked className="size-3 appearance-none border border-[#2e6f88] bg-[#4fc8f0]" />
            </label>
          </div>
          <svg className="h-14 w-full rounded-r-[4px] bg-[#12151b]" viewBox="0 0 164 56" fill="none">
            <path d="M5 51V15l37 5 27 31" stroke="#45b8e6" strokeWidth="3" />
            <circle cx="5" cy="15" r="2.500" fill="#f5ee3a" />
            <circle cx="42" cy="20" r="2.300" fill="#fbd24a" stroke="#f06a50" />
            <circle cx="5" cy="51" r="2.300" fill="#12151b" stroke="#e8e34a" />
            <circle cx="69" cy="51" r="2.300" fill="#12151b" stroke="#ea5560" />
            <path d="M158 47.500h4" stroke="#4fc8f0" strokeWidth="3" />
          </svg>
        </div>
        <div className="mt-[2px] grid grid-cols-[50px_42px_42px_42px_42px] items-start">
          <div className="flex justify-center pt-[10px]"><span className="size-[22px] rounded-full bg-[#8b8b8b]" /></div>
          <Knob label="Attack" value="0" amount={0} />
          <Knob label="Decay" value="100" amount={0.79} />
          <Knob label="Sustain" value="111" amount={0.87} />
          <Knob label="Release" value="72" amount={0.57} />
        </div>
        <div className="mt-px grid grid-cols-[50px_42px_42px_42px_42px]">
          <div className="relative ml-1 h-3 w-11 border border-[#2e2f33]">
            <select aria-label="Mode" className="block h-[10px] w-full appearance-none pl-[2px] text-[9px] font-bold leading-[10px] text-[#4fc8f0] outline-none"><option>Trigger</option></select>
            <Tri className="pointer-events-none absolute right-px top-[3px] h-[5px] w-[7px] text-[#e0e0e0]" />
          </div>
          <DevNum label="Attack slope" value="0.00" className="ml-[3px] w-9" />
          <DevNum label="Decay slope" value="0.00" className="ml-[3px] w-9" />
          <span />
          <DevNum label="Release slope" value="0.00" className="ml-[5px] w-9" />
        </div>
        <div className="mt-[2px] flex h-3 justify-end text-center text-[9px] font-bold leading-3 text-[#cfcfcf]">
          <span className="w-10">Min</span><span className="w-10">Max</span>
        </div>
        <div className="mt-[2px] flex justify-between pl-1">
          <DevNum label="Time" value="1.00 s" className="w-11" />
          <button className="ml-1 h-3 w-[75px] bg-[#4fc8f0] text-[9px] font-bold leading-3">Map</button>
          <button className="h-3 w-[13px] border border-[#2e2f33] bg-[#4b4c51] text-[9px] font-bold leading-[10px] text-[#cfcfcf]">X</button>
          <DevNum label="Min" value="0" blue className="w-[34px]" />
          <DevNum label="Max" value="100" blue className="w-[34px]" />
        </div>
      </div>
    </article>
  );
}

export default function App() {
  return (
    <div className="flex h-screen flex-col overflow-hidden bg-[#a5a5a5] font-['Liberation_Sans',Arial,sans-serif] text-[9px] leading-[11px] text-black">
      <header className="relative flex h-[7px] shrink-0 items-end justify-center overflow-hidden border-b border-[#b8b8b8] bg-[#dcdcdc]">
        <svg className="absolute left-[7px] top-0" width="50" height="4" viewBox="0 0 50 4" aria-hidden>
          <circle cx="5" cy="-2" r="5" fill="#fc5b57" /><circle cx="23" cy="-2" r="5" fill="#fdbc40" /><circle cx="41" cy="-2" r="5" fill="#2fc440" />
        </svg>
        <h1 className="text-[12px] leading-[11px] text-[#444]">ZEE Prismatic En Vivo 3* [Encanti Collab]</h1>
      </header>
      <div className="pb-2 pt-2"><Transport /></div>
      <main className="flex shrink-0 gap-2 pl-2 pr-[5px]">
        <div className="flex w-[366px] shrink-0 flex-col justify-between">
          <Browser />
          <GroovePool />
        </div>
        <Arrangement />
      </main>
      <div className="mt-[7px] flex min-h-0 flex-1 gap-[7px] pl-[7px] pr-[5px]">
        <aside className="w-[178px] shrink-0 rounded-t-[5px] bg-[#7d7d7d] px-1 pt-1">
          <div className="h-full bg-[#c6c6c6]">
            <h2 className="h-4 bg-[#f0efed] pl-[5px] text-[10px] font-bold italic leading-4">Track Display</h2>
            <div className="whitespace-nowrap pl-[5px] pt-[2px] text-[9px] font-bold leading-[13px]">
              <p>Click and drag to select time, then use<br />any available Edit menu command to<br />edit.</p>
              <p className="pt-[13px]">[Cmd + Opt + Drag] Scroll Display</p>
            </div>
          </div>
        </aside>
        <section className="flex min-w-0 flex-1 overflow-hidden rounded-t-[5px] bg-[#7d7d7d] pr-1 pt-[5px]">
          <div className="flex w-[15px] shrink-0 justify-center"><Rail /></div>
          <Device />
          <div className="flex w-[9px] shrink-0 justify-center"><Rail /></div>
          <div className="flex flex-1 items-center justify-center bg-[#c6c6c6] pt-2">
            <p className="font-bold">Drop an Instrument or Sample Here</p>
          </div>
        </section>
      </div>
    </div>
  );
}
